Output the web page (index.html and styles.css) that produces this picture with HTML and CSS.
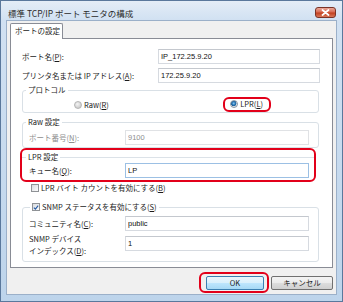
FILE: index.html
```html
<!DOCTYPE html>
<html>
<head>
<meta charset="utf-8">
<link rel="stylesheet" href="styles.css">
</head>
<body>
<div class="window">
  <div class="titlebar">
    <span class="title">標準 TCP/IP ポート モニタの構成</span>
    <span class="close">
      <svg width="9" height="7" viewBox="0 0 9 7"><path d="M1.5 1 L7.5 6 M7.5 1 L1.5 6" stroke="#fff" stroke-width="1.7" stroke-linecap="round"/></svg>
    </span>
  </div>
  <div class="client">
    <div class="tabs"><div class="tab">ポートの設定</div></div>
    <div class="panel">
      <div class="row top first">
        <label>ポート名(<u>P</u>):</label>
        <input type="text" value="IP_172.25.9.20">
      </div>
      <div class="row top">
        <label>プリンタ名または IP アドレス(<u>A</u>):</label>
        <input type="text" value="172.25.9.20">
      </div>

      <fieldset class="group proto">
        <legend>プロトコル</legend>
        <div class="radios">
          <span class="opt"><span class="radio"></span>Raw(<u>R</u>)</span>
          <span class="callout small"><span class="opt"><span class="radio on"></span>LPR(<u>L</u>)</span></span>
        </div>
      </fieldset>

      <fieldset class="group raw">
        <legend>Raw 設定</legend>
        <div class="row off">
          <label>ポート番号(<u>N</u>):</label>
          <input type="text" value="9100" disabled>
        </div>
      </fieldset>

      <div class="callout lpr">
        <fieldset class="lpr-group">
          <legend>LPR 設定</legend>
          <div class="row">
            <label>キュー名(<u>Q</u>):</label>
            <input type="text" class="focus" value="LP">
          </div>
        </fieldset>
      </div>

      <div class="checkrow"><span class="check"></span>LPR バイト カウントを有効にする(<u>B</u>)</div>

      <fieldset class="group snmp">
        <legend><span class="check on"><svg width="7" height="7" viewBox="0 0 7 7"><path d="M1 3.6 L2.8 5.4 L6 1.2" fill="none" stroke="#2b5fa8" stroke-width="1.4"/></svg></span>SNMP ステータスを有効にする(<u>S</u>)</legend>
        <div class="row first">
          <label>コミュニティ名(<u>C</u>):</label>
          <input type="text" value="public">
        </div>
        <div class="row tall">
          <label>SNMP デバイス<br>インデックス(<u>D</u>):</label>
          <input type="text" value="1">
        </div>
      </fieldset>
    </div>

    <div class="buttons">
      <span class="callout btn-call"><button class="btn default">OK</button></span>
      <button class="btn cancel">キャンセル</button>
    </div>
  </div>
</div>
</body>
</html>
```

FILE: styles.css
```css
* {
    box-sizing: border-box;
}
body {
    margin: 0;
    font-family: "Noto Sans CJK JP", "Noto Sans", sans-serif;
    font-size: 7.5px;
    color: #1b1b1b;
}
u {
    text-decoration: underline;
}

/* window frame */
.window {
    width: 343px;
    height: 302px;
    border: 1px solid #5a789c;
    background: linear-gradient(#e4edf7, #d1e1f2 19px, #bdd4eb);
    padding: 0 5px 6px;
    display: flex;
    flex-direction: column;
}
.titlebar {
    height: 19px;
    flex: none;
    display: flex;
    align-items: flex-start;
    justify-content: space-between;
}
.title {
    font-size: 8.5px;
    line-height: 11px;
    margin-top: 7px;
    padding-left: 2px;
    color: #2a2a2a;
}
.close {
    width: 21px;
    height: 11px;
    margin-top: 6px;
    margin-right: 1px;
    border: 1px solid #7a3326;
    border-radius: 3px;
    background: linear-gradient(#eaa999, #d86a52 45%, #c2401f 55%, #d9785a);
    display: flex;
    align-items: center;
    justify-content: center;
}

/* dialog client */
.client {
    flex: 1;
    background: #f0f0f0;
    border: 1px solid #9bb0c9;
    padding: 2px 3px 1px;
    display: flex;
    flex-direction: column;
}
.tabs {
    display: flex;
}
.tab {
    position: relative;
    z-index: 1;
    width: 53px;
    height: 16px;
    margin-bottom: -1px;
    border: 1px solid #898c95;
    border-bottom: none;
    border-radius: 2px 2px 0 0;
    background: #fff;
    padding-left: 4px;
    line-height: 14px;
}
.panel {
    height: 230px;
    flex: none;
    border: 1px solid #898c95;
    background: #fff;
    padding: 10px 13px 0 11px;
}

/* rows */
.row {
    display: flex;
    align-items: center;
}
.row label {
    flex: 1;
    line-height: 12px;
    white-space: nowrap;
}
.row.top + .row.top {
    margin-top: 4px;
}
.row.top input {
    width: 162px;
    margin-right: -1px;
}
input {
    width: 184px;
    height: 15px;
    border: 1px solid #d6dae0;
    border-top-color: #c4c8ce;
    background: #fff;
    font-family: "Liberation Sans", sans-serif;
    font-size: 7.5px;
    line-height: 12px;
    color: #111;
    padding: 0 2px 1px;
    outline: none;
}
input.focus {
    border-color: #9cc0e4;
}
.row.off label,
input:disabled {
    color: #8e8e8e;
}
input:disabled {
    border-color: #e0e2e5;
    background: #fff;
}

/* group boxes */
fieldset {
    margin: 0;
    min-width: 0;
}
legend {
    line-height: 10px;
    padding: 0 2px;
    margin-left: -3px;
}
.group {
    border: 1px solid #d9e0e6;
    border-radius: 3px;
    padding: 0 9px 0 6px;
}
.proto {
    margin-top: 2px;
}
.radios {
    display: flex;
    align-items: center;
    justify-content: space-between;
    padding: 2px 38px 0 45px;
}
.opt {
    display: flex;
    align-items: center;
    line-height: 10px;
}
.radio {
    width: 8px;
    height: 8px;
    margin-right: 2px;
    border-radius: 50%;
    border: 1px solid #b4b4b4;
    background: radial-gradient(circle at 40% 35%, #f4f4f4, #c9c9c9 80%);
}
.radio.on {
    border-color: #8a96a4;
    background: radial-gradient(circle at 45% 40%, #8cc8ee 0, #2a78b8 1.6px, #1c5d96 2.6px, #dfe3e7 2.9px);
}
.callout {
    border: 2px solid #e2001a;
    border-radius: 6px;
}
.callout.small {
    padding: 0 6px 1px 5px;
    height: 15px;
    display: flex;
    align-items: center;
}
.raw {
    margin-top: 4px;
}
.raw .row {
    padding: 3px 0 2px;
}
.lpr {
    margin: 0 3px 0 -2px;
    padding: 2px 0;
}
.lpr-group {
    border: none;
    border-top: 1px solid #dce2e8;
    padding: 0 5px 0 7px;
}
.lpr-group .row {
    margin-top: 1px;
}
.checkrow {
    display: flex;
    align-items: center;
    line-height: 10px;
    margin-top: 1px;
    padding-left: 9px;
}
.check {
    width: 8px;
    height: 8px;
    margin-right: 2px;
    border: 1px solid #8f9296;
    background: linear-gradient(135deg, #d8dbdf, #fbfbfb);
    display: inline-flex;
    align-items: center;
    justify-content: center;
}
.snmp {
    margin-top: 9px;
    padding-bottom: 4px;
}
.snmp legend {
    display: flex;
    align-items: center;
    margin-left: 1px;
}
.snmp .row.first {
    margin-top: 4px;
}
.snmp .row.tall {
    margin-top: 2px;
    align-items: flex-start;
}
.snmp .row.tall input {
    margin-top: 3px;
}

/* buttons */
.buttons {
    display: flex;
    justify-content: flex-end;
    align-items: center;
    margin-top: 4px;
}
.btn-call {
    padding: 2px 3px 1px 5px;
}
.btn {
    height: 14px;
    border: 1px solid #707070;
    border-radius: 2px;
    background: linear-gradient(#f3f3f3, #ebebeb 50%, #dddddd 51%, #cfcfcf);
    font-family: "Noto Sans CJK JP", sans-serif;
    font-size: 7.5px;
    color: #1b1b1b;
    padding: 0;
    line-height: 12px;
}
.btn.default {
    width: 58px;
    border-color: #3c7fb1;
    background: linear-gradient(#eaf6fd, #d9f0fc 50%, #bee6fd 51%, #a7d9f5);
}
.btn.cancel {
    width: 62px;
    margin-left: 2px;
}
```
